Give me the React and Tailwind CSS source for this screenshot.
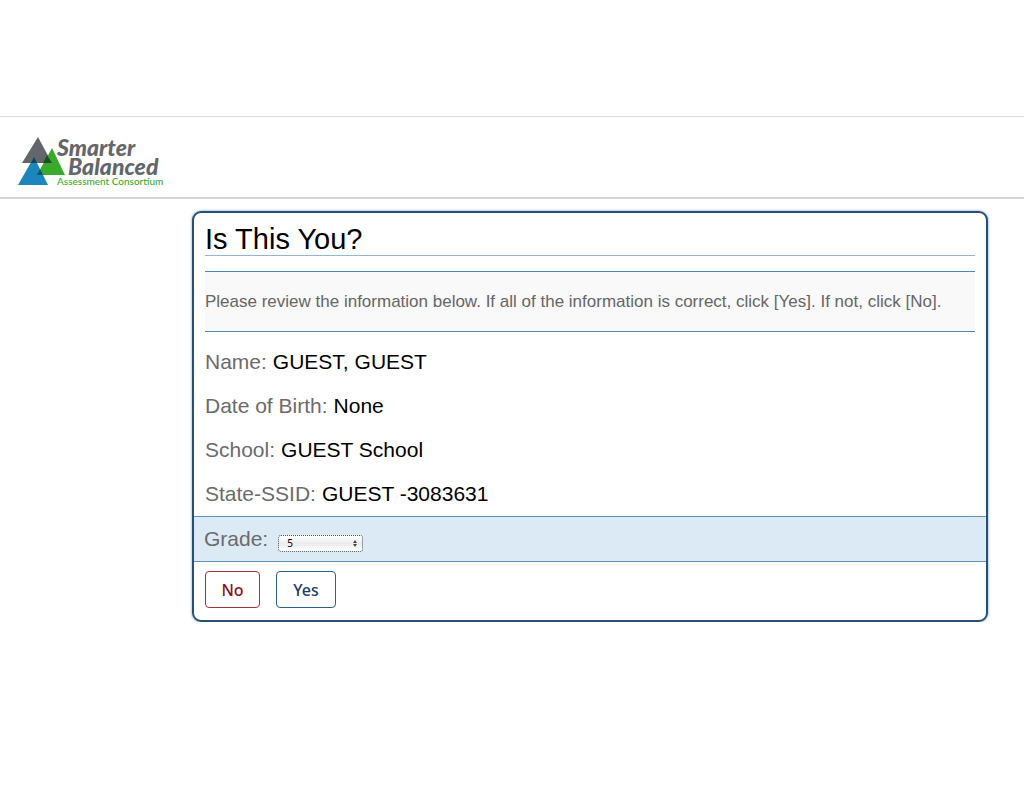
import React from "react";

const details = [
  { label: "Name:", value: "GUEST, GUEST" },
  { label: "Date of Birth:", value: "None" },
  { label: "School:", value: "GUEST School" },
  { label: "State-SSID:", value: "GUEST -3083631" },
];

const Logo = () => {
  return (
    <svg
      width="152"
      height="54"
      viewBox="0 -2 152 54"
      role="img"
      aria-label="Smarter Balanced Assessment Consortium"
    >
      <path d="M20 1 34 27H4Z" fill="#63666a" />
      <path d="M34 12 47 39H19Z" fill="#3aaa2c" />
      <path d="M16 21 30 49H0Z" fill="#1c85bb" />
      {/* overlaps */}
      <path d="M16 21 19 27H13Z" fill="#0b4360" />
      <path d="M25 27 29 19 34 27Z" fill="#1d4f22" />
      <path d="M22 33 25 39H19Z" fill="#075c55" />
      <g fontFamily='Lato, "Liberation Sans", sans-serif'>
        <text x="39" y="20" fontSize="23" fontWeight="900" fontStyle="italic" fill="#63666a">
          Smarter
        </text>
        <text x="50" y="39" fontSize="23" fontWeight="900" fontStyle="italic" fill="#63666a">
          Balanced
        </text>
        <text x="39" y="49" fontSize="10" fontWeight="500" fill="#3aaa2c">
          Assessment Consortium
        </text>
      </g>
    </svg>
  );
};

const Detail = ({ label, value }) => {
  return (
    <div className="flex h-11 items-center gap-1.5 text-[21px]">
      <dt className="text-[#6b6b6b]">{label}</dt>
      <dd className="text-black">{value}</dd>
    </div>
  );
};

const GradeSelect = () => {
  return (
    <div className="flex h-[46px] items-center gap-2.5 border-y border-[#5e93b5] bg-[#dceaf5] px-2.5">
      <label htmlFor="grade" className="text-[21px] text-[#6b6b6b]">
        Grade:
      </label>
      <div className="relative mt-2 flex">
        <select
          id="grade"
          defaultValue="5"
          className="h-[17px] w-[85px] appearance-none rounded-[3px] border border-dotted border-[#3d5260] bg-linear-to-b from-white via-[#ececec] to-white pl-2 font-['Noto_Sans',sans-serif] text-[10px] leading-[14px] text-black"
        >
          <option>3</option>
          <option>4</option>
          <option>5</option>
          <option>6</option>
          <option>7</option>
          <option>8</option>
          <option>11</option>
        </select>
        <svg
          className="pointer-events-none absolute top-[5px] right-[6px]"
          width="4"
          height="7"
          viewBox="0 0 4 7"
          fill="#444"
          aria-hidden="true"
        >
          <path d="M2 0 4 3H0Z" />
          <path d="M2 7 4 4H0Z" />
        </svg>
      </div>
    </div>
  );
};

const App = () => {
  return (
    <div className="bg-white pt-[116px] font-['Liberation_Sans',Arial,sans-serif]">
      <header className="flex h-[83px] items-start border-t border-b-2 border-t-[#dcdcdc] border-b-[#d4d4d4] px-[18px] pt-[17px]">
        <Logo />
      </header>
      <main className="mt-3 mr-9 ml-48 rounded-[9px] border-2 border-[#24507a] shadow-[0_0_3px_#7f9db5]">
        <div className="px-[11px]">
          <h1 className="h-[43px] border-b border-[#94b6d3] pt-2.5 text-[29px] leading-8 text-black">
            Is This You?
          </h1>
          <p className="mt-[15px] border-y border-[#4d87b3] bg-[#f9f9f9] py-4 text-[17px] leading-[27px] text-[#666]">
            Please review the information below. If all of the information is correct, click [Yes]. If not, click [No].
          </p>
          <dl className="pt-2">
            {details.map((item) => (
              <Detail key={item.label} label={item.label} value={item.value} />
            ))}
          </dl>
        </div>
        <GradeSelect />
        <div className="flex gap-4 px-[11px] pt-[9px] pb-3 font-['Noto_Sans',sans-serif] text-base font-medium">
          <button className="h-[37px] w-[55px] cursor-pointer rounded border border-[#a8323a] text-[#8b1015]">
            No
          </button>
          <button className="h-[37px] w-[60px] cursor-pointer rounded border border-[#2f5f8c] text-[#1d3e69]">
            Yes
          </button>
        </div>
      </main>
    </div>
  );
};

export default App;
